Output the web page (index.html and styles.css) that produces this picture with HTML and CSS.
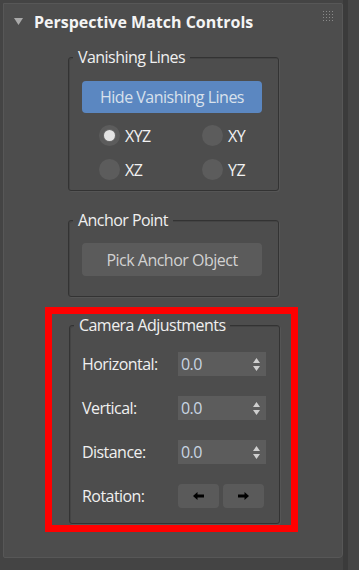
FILE: index.html
```html
<!DOCTYPE html>
<html>
<head>
<meta charset="utf-8">
<link rel="stylesheet" href="styles.css">
</head>
<body>
<div class="page">
  <div class="panel">
    <div class="header">
      <svg class="caret" width="9" height="7" viewBox="0 0 9 7"><path d="M0 0 H9 L4.5 7 Z" fill="#a9a9a9"/></svg>
      <span class="title">Perspective Match Controls</span>
      <svg class="grip" width="10" height="10" viewBox="0 0 10 10">
        <g fill="#8a8a8a">
          <rect x="0" y="0" width="1" height="1"/><rect x="3" y="0" width="1" height="1"/><rect x="6" y="0" width="1" height="1"/><rect x="9" y="0" width="1" height="1"/>
          <rect x="0" y="3" width="1" height="1"/><rect x="3" y="3" width="1" height="1"/><rect x="6" y="3" width="1" height="1"/><rect x="9" y="3" width="1" height="1"/>
          <rect x="0" y="6" width="1" height="1"/><rect x="3" y="6" width="1" height="1"/><rect x="6" y="6" width="1" height="1"/><rect x="9" y="6" width="1" height="1"/>
          <rect x="0" y="9" width="1" height="1"/><rect x="3" y="9" width="1" height="1"/><rect x="6" y="9" width="1" height="1"/><rect x="9" y="9" width="1" height="1"/>
        </g>
      </svg>
    </div>

    <div class="group group-vanish">
      <span class="legend">Vanishing Lines</span>
      <button class="btn btn-blue">Hide Vanishing Lines</button>
      <div class="radios">
        <label class="radio"><span class="dot checked"></span>XYZ</label>
        <label class="radio"><span class="dot"></span>XY</label>
        <label class="radio"><span class="dot"></span>XZ</label>
        <label class="radio"><span class="dot"></span>YZ</label>
      </div>
    </div>

    <div class="group group-anchor">
      <span class="legend">Anchor Point</span>
      <button class="btn btn-gray">Pick Anchor Object</button>
    </div>

    <div class="highlight">
      <div class="group group-camera">
        <span class="legend">Camera Adjustments</span>
        <div class="row">
          <span class="label">Horizontal:</span>
          <div class="spinner"><span class="val">0.0</span>
            <svg width="7" height="13" viewBox="0 0 7 13"><path d="M3.5 0 L7 5 H0 Z M0 8 H7 L3.5 13 Z" fill="#cfcfcf"/></svg>
          </div>
        </div>
        <div class="row">
          <span class="label">Vertical:</span>
          <div class="spinner"><span class="val">0.0</span>
            <svg width="7" height="13" viewBox="0 0 7 13"><path d="M3.5 0 L7 5 H0 Z M0 8 H7 L3.5 13 Z" fill="#cfcfcf"/></svg>
          </div>
        </div>
        <div class="row">
          <span class="label">Distance:</span>
          <div class="spinner"><span class="val">0.0</span>
            <svg width="7" height="13" viewBox="0 0 7 13"><path d="M3.5 0 L7 5 H0 Z M0 8 H7 L3.5 13 Z" fill="#cfcfcf"/></svg>
          </div>
        </div>
        <div class="row">
          <span class="label">Rotation:</span>
          <div class="rot">
            <button class="rbtn"><svg width="11" height="8" viewBox="0 0 11 8"><path d="M0 4 L4.5 0 V2.5 H11 V5.5 H4.5 V8 Z" fill="#000"/></svg></button>
            <button class="rbtn"><svg width="11" height="8" viewBox="0 0 11 8"><path d="M11 4 L6.5 0 V2.5 H0 V5.5 H6.5 V8 Z" fill="#000"/></svg></button>
          </div>
        </div>
      </div>
    </div>
  </div>
  <div class="side">
    <div class="side-a"></div>
    <div class="side-b"></div>
  </div>
</div>
</body>
</html>
```

FILE: styles.css
```css
* { box-sizing: border-box; }
html, body { margin: 0; padding: 0; }
body {
  background: #424242;
  font-family: "Open Sans", "Noto Sans", sans-serif;
  color: #eeeeee;
  width: 359px;
  height: 570px;
  overflow: hidden;
}
.page {
  display: flex;
  padding: 3px 0 0 3px;
  height: 570px;
  background: #444444;
}
.panel {
  width: 340px;
  height: 555px;
  background: #4d4d4d;
  border: 1px solid #575757;
  border-radius: 0 2px 4px 2px;
  display: flex;
  flex-direction: column;
}
.side { display: flex; height: 570px; margin-top: -3px; }
.side-a { width: 5px; background: #3b3b3b; }
.side-b { width: 11px; background: #454545; }

.header {
  height: 36px;
  display: flex;
  align-items: center;
  padding: 0 9px 0 10px;
}
.caret { margin-right: 11px; margin-top: -1px; }
.title {
  font-weight: 700;
  font-size: 16px;
  color: #f4f4f4;
  flex: 1;
}
.grip { align-self: flex-start; margin-top: 7px; }

.group {
  position: relative;
  margin-left: 64px;
  width: 211px;
  border: 1px solid #333333;
  border-radius: 3px;
  box-shadow: inset 1px 1px 0 #444, 1px 1px 0 #555;
  display: flex;
  flex-direction: column;
  font-size: 16px;
  letter-spacing: -0.55px;
}
.legend {
  position: absolute;
  top: -12px;
  left: 4px;
  padding: 0 5px 0 5px;
  background: #4d4d4d;
  font-size: 16px;
  line-height: 22px;
  color: #f0f0f0;
}
.btn {
  font-family: inherit;
  font-size: 16px;
  letter-spacing: -0.5px;
  border: none;
  border-radius: 4px;
  width: 180px;
  margin-left: 13px;
  padding: 0;
}
.btn-blue {
  background: #5b87c1;
  color: #d8e1ec;
  height: 32px;
}
.btn-gray {
  background: #5b5b5b;
  color: #d2d2d2;
  height: 33px;
}
.group-vanish {
  margin-top: 17px;
  height: 134px;
  padding-top: 23px;
}
.radios {
  display: grid;
  grid-template-columns: 103px 80px;
  row-gap: 13px;
  margin: 12px 0 0 30px;
}
.radio {
  display: flex;
  align-items: center;
  gap: 5px;
  height: 21px;
  font-size: 16px;
  color: #f2f2f2;
}
.dot {
  width: 21px;
  height: 21px;
  border-radius: 50%;
  background: #5c5c5c;
  display: flex;
  align-items: center;
  justify-content: center;
}
.dot.checked::after {
  content: "";
  width: 11px;
  height: 11px;
  border-radius: 50%;
  background: #e4e4e4;
  box-shadow: 0 0 0 1px #6a6a6a;
}
.group-anchor {
  margin-top: 29px;
  height: 77px;
  padding-top: 22px;
}
.highlight {
  margin: 10px 0 0 41px;
  width: 253px;
  height: 225px;
  border: 7px solid #ff0000;
  padding: 11px 11px 0 17px;
}
.group-camera {
  margin-left: 0;
  height: 199px;
  padding: 26px 0 0 12px;
  gap: 20px;
}
.row {
  display: flex;
  align-items: center;
  height: 24px;
}
.label {
  width: 96px;
  font-size: 16px;
  color: #f0f0f0;
}
.spinner {
  width: 88px;
  height: 24px;
  background: #5c5c5c;
  display: flex;
  align-items: center;
  justify-content: space-between;
  padding: 0 6px 0 3px;
}
.val {
  font-size: 16px;
  color: #c9d5e3;
}
.rot { display: flex; gap: 4px; }
.rbtn {
  width: 41px;
  height: 24px;
  border: none;
  border-radius: 4px;
  background: #5a5a5a;
  display: flex;
  align-items: center;
  justify-content: center;
  padding: 0;
}
```
